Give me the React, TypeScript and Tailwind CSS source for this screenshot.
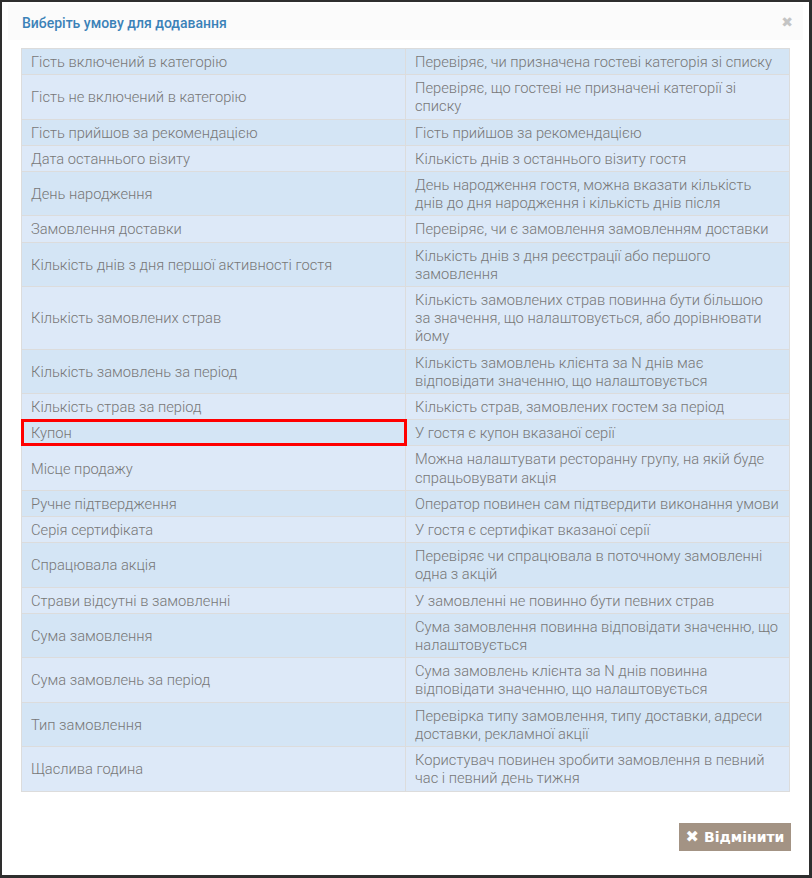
import React from "react";

const rows: [string, string][] = [
  ["Гість включений в категорію", "Перевіряє, чи призначена гостеві категорія зі списку"],
  ["Гість не включений в категорію", "Перевіряє, що гостеві не призначені категорії зі списку"],
  ["Гість прийшов за рекомендацією", "Гість прийшов за рекомендацією"],
  ["Дата останнього візиту", "Кількість днів з останнього візиту гостя"],
  ["День народження", "День народження гостя, можна вказати кількість днів до дня народження і кількість днів після"],
  ["Замовлення доставки", "Перевіряє, чи є замовлення замовленням доставки"],
  ["Кількість днів з дня першої активності гостя", "Кількість днів з дня реєстрації або першого замовлення"],
  ["Кількість замовлених страв", "Кількість замовлених страв повинна бути більшою за значення, що налаштовується, або дорівнювати йому"],
  ["Кількість замовлень за період", "Кількість замовлень клієнта за N днів має відповідати значенню, що налаштовується"],
  ["Кількість страв за період", "Кількість страв, замовлених гостем за період"],
  ["Купон", "У гостя є купон вказаної серії"],
  ["Місце продажу", "Можна налаштувати ресторанну групу, на якій буде спрацьовувати акція"],
  ["Ручне підтвердження", "Оператор повинен сам підтвердити виконання умови"],
  ["Серія сертифіката", "У гостя є сертифікат вказаної серії"],
  ["Спрацювала акція", "Перевіряє чи спрацювала в поточному замовленні одна з акцій"],
  ["Страви відсутні в замовленні", "У замовленні не повинно бути певних страв"],
  ["Сума замовлення", "Сума замовлення повинна відповідати значенню, що налаштовується"],
  ["Сума замовлень за період", "Сума замовлень клієнта за N днів повинна відповідати значенню, що налаштовується"],
  ["Тип замовлення", "Перевірка типу замовлення, типу доставки, адреси доставки, рекламної акції"],
  ["Щаслива година", "Користувач повинен зробити замовлення в певний час і певний день тижня"],
];

export default function App() {
  return (
    <div className="h-[878px] w-[812px] bg-[#2e2e2e] pt-[2px] pl-[2px] pr-[3px] pb-[3px]" style={{ fontFamily: "Roboto, 'Noto Sans', sans-serif" }}>
      <div className="h-full w-full bg-white flex flex-col">
        <div className="mx-[6px] mt-[2px] h-[36px] bg-[#fbfbfb] flex items-center justify-between pl-[14px] pr-[10px]">
          <span className="text-[14px] font-medium text-[#3b82b8] leading-[18px] pt-[2px]">Виберіть умову для додавання</span>
          <span className="text-[14px] font-bold text-[#c4c4c4] leading-none" style={{ fontFamily: "'DejaVu Sans', sans-serif" }}>✖</span>
        </div>
        <div className="ml-[19px] mr-[19px] mt-[8px]">
          <table className="w-full border-collapse table-fixed text-[14.7px] font-light leading-[18.2px] text-[#777777]">
            <tbody>
              {rows.map(([a, b], i) => (
                <tr key={i} className={i % 2 === 0 ? "bg-[#d4e5f5]" : "bg-[#dde9f8]"}>
                  <td className="relative w-1/2 border border-[#dcdcdc] pt-[4px] pb-[3px] pl-[9px] pr-[8px] align-middle">
                    {a}
                    {a === "Купон" && (
                      <div className="absolute -left-[1px] -top-[1px] -bottom-[1px] right-[-2px] border-[3px] border-[#ff0000]" />
                    )}
                  </td>
                  <td className="w-1/2 border border-[#dcdcdc] pt-[4px] pb-[3px] pl-[9px] pr-[8px] align-middle">{b}</td>
                </tr>
              ))}
            </tbody>
          </table>
        </div>
        <div className="flex-1" />
        <div className="flex justify-end mr-[18px] mb-[24px]">
          <button className="h-[28px] w-[112px] justify-center flex items-center gap-[5px] bg-[#a39384] text-white text-[14px]" style={{ fontFamily: "'DejaVu Sans', Verdana, sans-serif" }}>
            <span className="text-[16px] font-bold leading-none">✖</span>
            <span style={{ fontWeight: 600 }}>Відмінити</span>
          </button>
        </div>
      </div>
    </div>
  );
}
